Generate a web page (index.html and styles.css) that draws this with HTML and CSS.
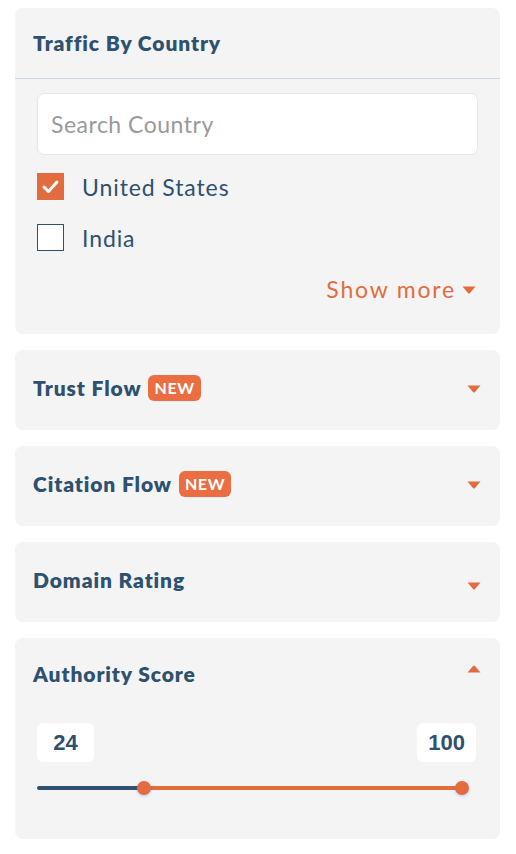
FILE: index.html
```html
<!DOCTYPE html>
<html>
<head>
<meta charset="utf-8">
<link rel="stylesheet" href="styles.css">
</head>
<body>
<div class="panel">
  <section class="card card-open">
    <div class="card-head bordered">
      <h2 class="title">Traffic By Country</h2>
    </div>
    <div class="country-body">
      <div class="search">Search Country</div>
      <label class="check-row">
        <span class="box checked">
          <svg viewBox="0 0 27 27" width="27" height="27"><path d="M7 14 L11.5 18.5 L20 9" fill="none" stroke="#fff" stroke-width="3" stroke-linecap="round" stroke-linejoin="round"/></svg>
        </span>
        <span class="check-label">United States</span>
      </label>
      <label class="check-row">
        <span class="box"></span>
        <span class="check-label">India</span>
      </label>
      <div class="more-row">
        <span class="more">Show more</span>
        <svg class="caret" viewBox="0 0 14 8" width="14" height="8"><path d="M0.5 0.5 H13.5 L8 7 Q7 8 6 7 Z" fill="#e36c3e"/></svg>
      </div>
    </div>
  </section>

  <section class="card">
    <div class="card-head">
      <h2 class="title">Trust Flow <span class="badge">NEW</span></h2>
      <svg class="caret" viewBox="0 0 14 8" width="14" height="8"><path d="M0.5 0.5 H13.5 L8 7 Q7 8 6 7 Z" fill="#e36c3e"/></svg>
    </div>
  </section>

  <section class="card">
    <div class="card-head">
      <h2 class="title">Citation Flow <span class="badge">NEW</span></h2>
      <svg class="caret" viewBox="0 0 14 8" width="14" height="8"><path d="M0.5 0.5 H13.5 L8 7 Q7 8 6 7 Z" fill="#e36c3e"/></svg>
    </div>
  </section>

  <section class="card">
    <div class="card-head">
      <h2 class="title">Domain Rating</h2>
      <svg class="caret low" viewBox="0 0 14 8" width="14" height="8"><path d="M0.5 0.5 H13.5 L8 7 Q7 8 6 7 Z" fill="#e36c3e"/></svg>
    </div>
  </section>

  <section class="card card-slider">
    <div class="card-head">
      <h2 class="title">Authority Score</h2>
      <svg class="caret high" viewBox="0 0 14 8" width="14" height="8"><path d="M0.5 7.5 H13.5 L8 1 Q7 0 6 1 Z" fill="#e36c3e"/></svg>
    </div>
    <div class="slider-body">
      <div class="values">
        <span class="val">24</span>
        <span class="val">100</span>
      </div>
      <div class="track">
        <div class="seg-dark" style="width:107px"></div>
        <div class="seg-orange"></div>
        <span class="thumb t-min" style="left:107px"></span>
        <span class="thumb t-max"></span>
      </div>
    </div>
  </section>

  <section class="card card-next"></section>
</div>
</body>
</html>
```

FILE: styles.css
```css
* { box-sizing: border-box; }
html, body { margin: 0; padding: 0; background: #fff; }
body { font-family: "Lato", "Noto Sans", sans-serif; color: #2e5170; }

.panel {
  width: 485px;
  margin-left: 15px;
  padding-top: 8px;
  display: flex;
  flex-direction: column;
  gap: 16px;
}

.card {
  background: #f4f4f4;
  border-radius: 8px;
}

.card-head {
  height: 80px;
  padding: 0 19px 5px 18px;
  display: flex;
  align-items: center;
  justify-content: space-between;
}
.card-head.bordered {
  height: 71px;
  padding-bottom: 0;
  border-bottom: 1px solid #cfd9e1;
}

.title {
  margin: 0;
  font-size: 21px;
  font-weight: 800;
  letter-spacing: 0.9px;
  color: #2e5170;
  display: flex;
  align-items: center;
  gap: 7px;
  line-height: 28px;
}

.badge {
  display: inline-flex;
  align-items: center;
  justify-content: center;
  height: 26px;
  padding: 0 6px;
  background: #ea6e42;
  color: #fff;
  border-radius: 6px;
  font-size: 16px;
  font-weight: 700;
  letter-spacing: 0.6px;
  margin-top: 1px;
}

.caret { display: block; margin-top: 2px; }
.caret.low { margin-top: 12px; }
.caret.high { margin-top: -10px; }

.country-body {
  padding: 14px 22px 0 22px;
  height: 255px;
}
.search {
  height: 62px;
  background: #fff;
  border: 1px solid #e6e6e6;
  border-radius: 7px;
  padding: 0 13px;
  display: flex;
  align-items: center;
  font-size: 23px;
  letter-spacing: 0.5px;
  color: #9a9a9a;
  margin-bottom: 18px;
}

.check-row {
  display: flex;
  align-items: center;
  gap: 18px;
  height: 27px;
  margin-bottom: 24px;
}
.box {
  width: 27px;
  height: 27px;
  background: #fff;
  border: 1.5px solid #2e5170;
  display: block;
}
.box.checked {
  background: #e36c3e;
  border: none;
}
.box svg { display: block; }
.check-label {
  font-size: 23px;
  color: #2e5170;
  letter-spacing: 0.9px;
}

.more-row {
  display: flex;
  justify-content: flex-end;
  align-items: center;
  gap: 6px;
  margin-top: 13px;
  padding-right: 2px;
}
.more {
  font-size: 23px;
  color: #e36c3e;
  letter-spacing: 1.8px;
}

.card-slider { height: 201px; }
.card-slider .card-head { height: 72px; padding-bottom: 0; }
.slider-body { padding: 13px 24px 0 22px; }
.values {
  display: flex;
  justify-content: space-between;
}
.val {
  height: 39px;
  min-width: 57px;
  padding: 0 11px;
  background: #fff;
  border-radius: 6px;
  display: flex;
  align-items: center;
  justify-content: center;
  font-family: "Liberation Sans", Arial, sans-serif;
  font-weight: 700;
  font-size: 22px;
  color: #2e5170;
}
.track {
  position: relative;
  margin-top: 24px;
  height: 4px;
  width: 425px;
  display: flex;
}
.seg-dark { height: 4px; background: #2e5170; border-radius: 2px 0 0 2px; }
.seg-orange { flex: 1; height: 4px; background: #e36c3e; }
.thumb {
  position: absolute;
  top: -5px;
  width: 14px;
  height: 14px;
  margin-left: -7px;
  border-radius: 50%;
  background: #e36c3e;
  box-shadow: 0 1px 3px rgba(90, 90, 255, 0.35);
}
.t-max { left: 425px; }

.card-next { height: 40px; }
```
